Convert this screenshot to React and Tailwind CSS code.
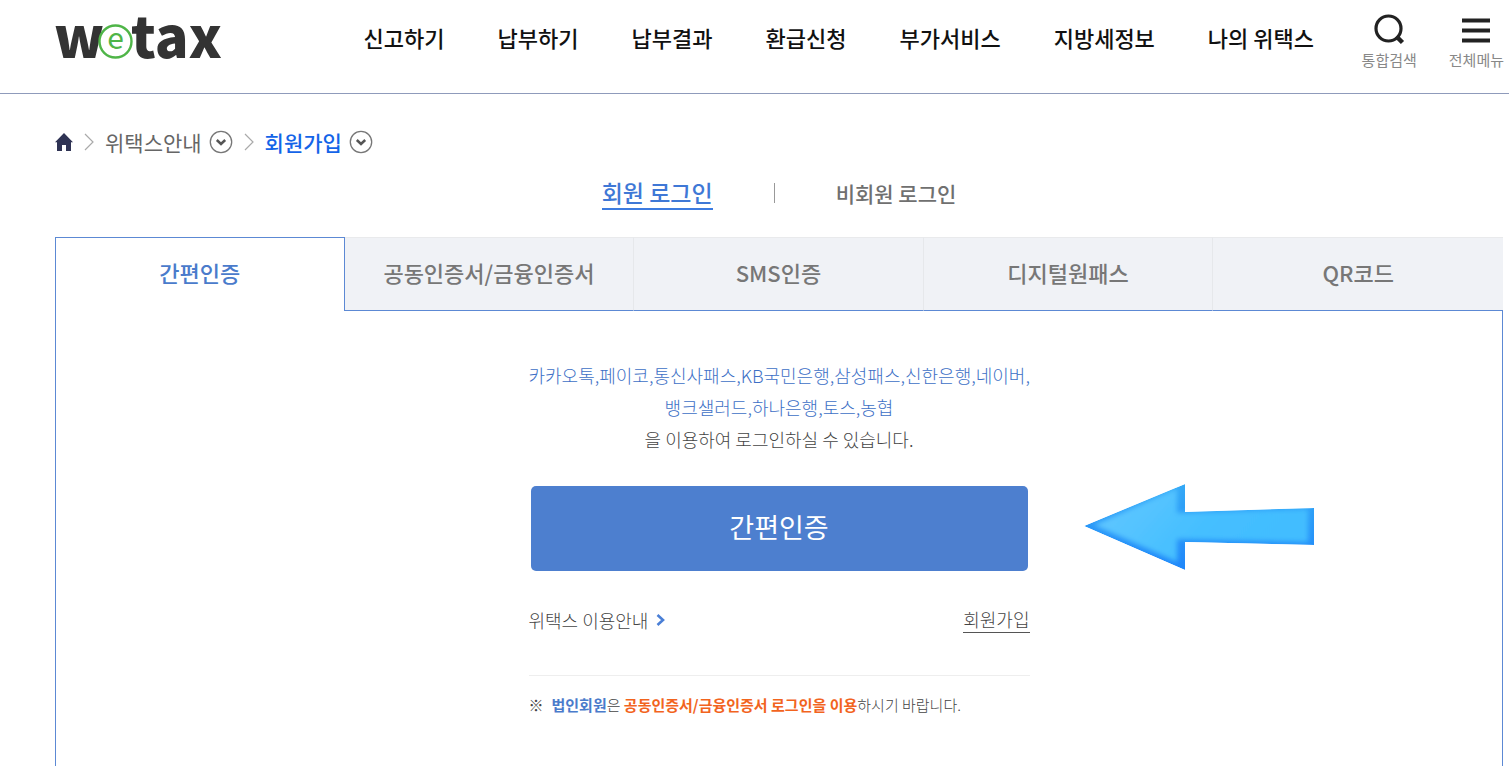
const NAV_ITEMS = [
  "신고하기",
  "납부하기",
  "납부결과",
  "환급신청",
  "부가서비스",
  "지방세정보",
  "나의 위택스",
];

const AUTH_TABS = [
  "간편인증",
  "공동인증서/금융인증서",
  "SMS인증",
  "디지털원패스",
  "QR코드",
];

function Logo() {
  return (
    <a href="#" aria-label="wetax" className="shrink-0">
      <svg width="172" height="74" viewBox="0 0 172 74" className="overflow-visible">
        <g
          fill="#333333"
          fontFamily="'Noto Sans CJK KR', sans-serif"
          fontWeight="900"
          fontSize="56"
        >
          <text x="0" y="58">w</text>
          <text x="77" y="58">tax</text>
        </g>
        <circle cx="61.5" cy="41.5" r="16" fill="#fff" stroke="#4fb548" strokeWidth="2.4" />
        <text
          x="61.5"
          y="49"
          textAnchor="middle"
          fill="#4fb548"
          fontFamily="'Noto Sans CJK KR', sans-serif"
          fontSize="30"
        >
          e
        </text>
      </svg>
    </a>
  );
}

// Top bar => logo, main menu, search and full menu buttons
function Header() {
  return (
    <header className="flex h-[94px] items-start justify-between border-b border-[#8f9bbb] pl-[54px] pr-[5px]">
      <Logo />
      <nav className="flex items-center gap-[53px] pt-[21px] pl-[90px] text-[22px] leading-8 font-medium text-[#111]">
        {NAV_ITEMS.map((item) => (
          <a key={item} href="#">
            {item}
          </a>
        ))}
      </nav>
      <div className="flex gap-8 pt-[14px] text-[15px] leading-5 text-[#888]">
        <button className="flex flex-col items-center gap-1">
          <svg width="32" height="32" viewBox="0 0 32 32" fill="none" stroke="#222" strokeWidth="3.2">
            <circle cx="15.5" cy="14.5" r="12.5" />
            <path d="M23.5 22.5l6 6" strokeWidth="4.5" />
          </svg>
          통합검색
        </button>
        <button className="flex flex-col items-center gap-1">
          <svg width="32" height="32" viewBox="0 0 32 32" stroke="#222" strokeWidth="4">
            <path d="M2 6.5h28M2 16.5h28M2 26.5h28" />
          </svg>
          전체메뉴
        </button>
      </div>
    </header>
  );
}

function Separator() {
  return (
    <svg width="10" height="18" viewBox="0 0 10 18" fill="none" stroke="#aaa" strokeWidth="1.2">
      <path d="M1 1l8 8-8 8" />
    </svg>
  );
}

function DropButton({ label }) {
  return (
    <button aria-label={label}>
      <svg width="24" height="24" viewBox="0 0 24 24" fill="none" stroke="#777">
        <circle cx="12" cy="12" r="10.7" strokeWidth="1.3" />
        <path d="M7.8 10l4.2 4 4.2-4" stroke="#555" strokeWidth="2.5" />
      </svg>
    </button>
  );
}

function Breadcrumb() {
  return (
    <nav className="flex h-8 items-center text-[21px] leading-8 text-[#666]">
      <a href="#" aria-label="home">
        <svg width="18" height="18" viewBox="0 0 18 18" fill="#2f3354">
          <path d="M9 0l9 9.3h-2V18h-5v-6H7v6H2V9.3H0z" />
        </svg>
      </a>
      <span className="mx-[11px]">
        <Separator />
      </span>
      <a href="#" className="mr-[7px]">
        위택스안내
      </a>
      <DropButton label="위택스안내" />
      <span className="mx-[11px]">
        <Separator />
      </span>
      <a href="#" className="mr-[7px] font-medium text-[#1464e8]">
        회원가입
      </a>
      <DropButton label="회원가입" />
    </nav>
  );
}

function LoginTypes() {
  return (
    <div className="mt-[17px] flex h-9 items-center justify-center leading-8 font-medium">
      <a href="#" className="border-b-2 border-[#3d7be0] text-[23px] text-[#3f78d6]">
        회원 로그인
      </a>
      <span className="mx-[61px] h-5 w-px bg-[#999]" />
      <a href="#" className="text-[21px] text-[#707070]">
        비회원 로그인
      </a>
    </div>
  );
}

function AuthTabs() {
  return (
    <div role="tablist" className="grid grid-cols-5 text-[22px] font-medium">
      {AUTH_TABS.map((tab, i) => (
        <button
          key={tab}
          role="tab"
          aria-selected={i === 0}
          className={
            i === 0
              ? "h-[74px] border-x border-t border-[#5c89d4] bg-white pb-1 text-[#4a7bcb]"
              : "h-[74px] border-t border-r border-b border-t-[#e9eaec] border-r-[#e6e8eb] border-b-[#5c89d4] bg-[#f0f2f6] pb-1 text-[#777] last:border-r-0"
          }
        >
          {tab}
        </button>
      ))}
    </div>
  );
}

// Pointer graphic shown next to the main button
function PointerArrow() {
  return (
    <svg
      className="absolute bottom-0 left-full ml-[54px]"
      width="230"
      height="88"
      viewBox="0 0 230 88"
    >
      <defs>
        <linearGradient id="edge" x1="0" y1="0" x2="0" y2="1">
          <stop offset="0" stopColor="#34a9f6" />
          <stop offset="1" stopColor="#1f86fa" />
        </linearGradient>
        <linearGradient id="face" x1="0" y1="0" x2="1" y2="0.3">
          <stop offset="0" stopColor="#66c8ff" />
          <stop offset="0.6" stopColor="#45bfff" />
          <stop offset="1" stopColor="#42bdff" />
        </linearGradient>
        <filter id="soften" x="-5%" y="-10%" width="110%" height="120%">
          <feGaussianBlur stdDeviation="2.5" />
        </filter>
        <clipPath id="shape">
          <path d="M0 43L101 1V29L230 25V62L101 59V87Z" />
        </clipPath>
      </defs>
      <g clipPath="url(#shape)">
        <path d="M0 43L101 1V29L230 25V62L101 59V87Z" fill="url(#edge)" />
        <path
          d="M10 42L93 5V30L224 26V59L93 56V79Z"
          fill="url(#face)"
          filter="url(#soften)"
        />
      </g>
    </svg>
  );
}

function SimpleAuthPanel() {
  return (
    <section className="flex-1 border-x border-[#5c89d4] pt-12">
      <div className="mx-auto w-[501px] text-[18px] leading-8 text-[#666]">
        <p className="text-center font-light whitespace-nowrap text-[#444]">
          <span className="text-[#3d70c6]">
            카카오톡,페이코,통신사패스,KB국민은행,삼성패스,신한은행,네이버,
            <br />
            뱅크샐러드,하나은행,토스,농협
          </span>
          <br />을 이용하여 로그인하실 수 있습니다.
        </p>

        <div className="relative mt-[31px] px-[2px]">
          <button className="h-[85px] w-full rounded-[5px] bg-[#4d7fcf] pb-1 text-[27px] text-white">
            간편인증
          </button>
          <PointerArrow />
        </div>

        <div className="mt-[35px] flex items-start justify-between border-b border-[#eee] pb-[41px] font-light text-[#444]">
          <a href="#" className="flex items-center gap-2 leading-7">
            위택스 이용안내
            <svg width="10" height="12" viewBox="0 0 10 12" fill="none" stroke="#4a7fd6" strokeWidth="2.6">
              <path d="M1.5 1l5.5 5-5.5 5" />
            </svg>
          </a>
          <a href="#" className="border-b border-[#555] leading-[26px]">
            회원가입
          </a>
        </div>

        <p className="mt-[13px] text-[15px] font-light whitespace-nowrap text-[#444]">
          <span className="mr-2">※</span>
          <strong className="font-bold text-[#4a7bcb]">법인회원</strong>은{" "}
          <strong className="font-bold text-[#f2641e]">
            공동인증서/금융인증서 로그인을 이용
          </strong>
          하시기 바랍니다.
        </p>
      </div>
    </section>
  );
}

export default function App() {
  return (
    <div className="flex min-h-screen flex-col bg-white font-['Noto_Sans_CJK_KR',sans-serif]">
      <Header />
      <main className="flex flex-1 flex-col pt-8 pr-[6px] pl-[55px]">
        <Breadcrumb />
        <LoginTypes />
        <div className="mt-[26px] flex flex-1 flex-col">
          <AuthTabs />
          <SimpleAuthPanel />
        </div>
      </main>
    </div>
  );
}
